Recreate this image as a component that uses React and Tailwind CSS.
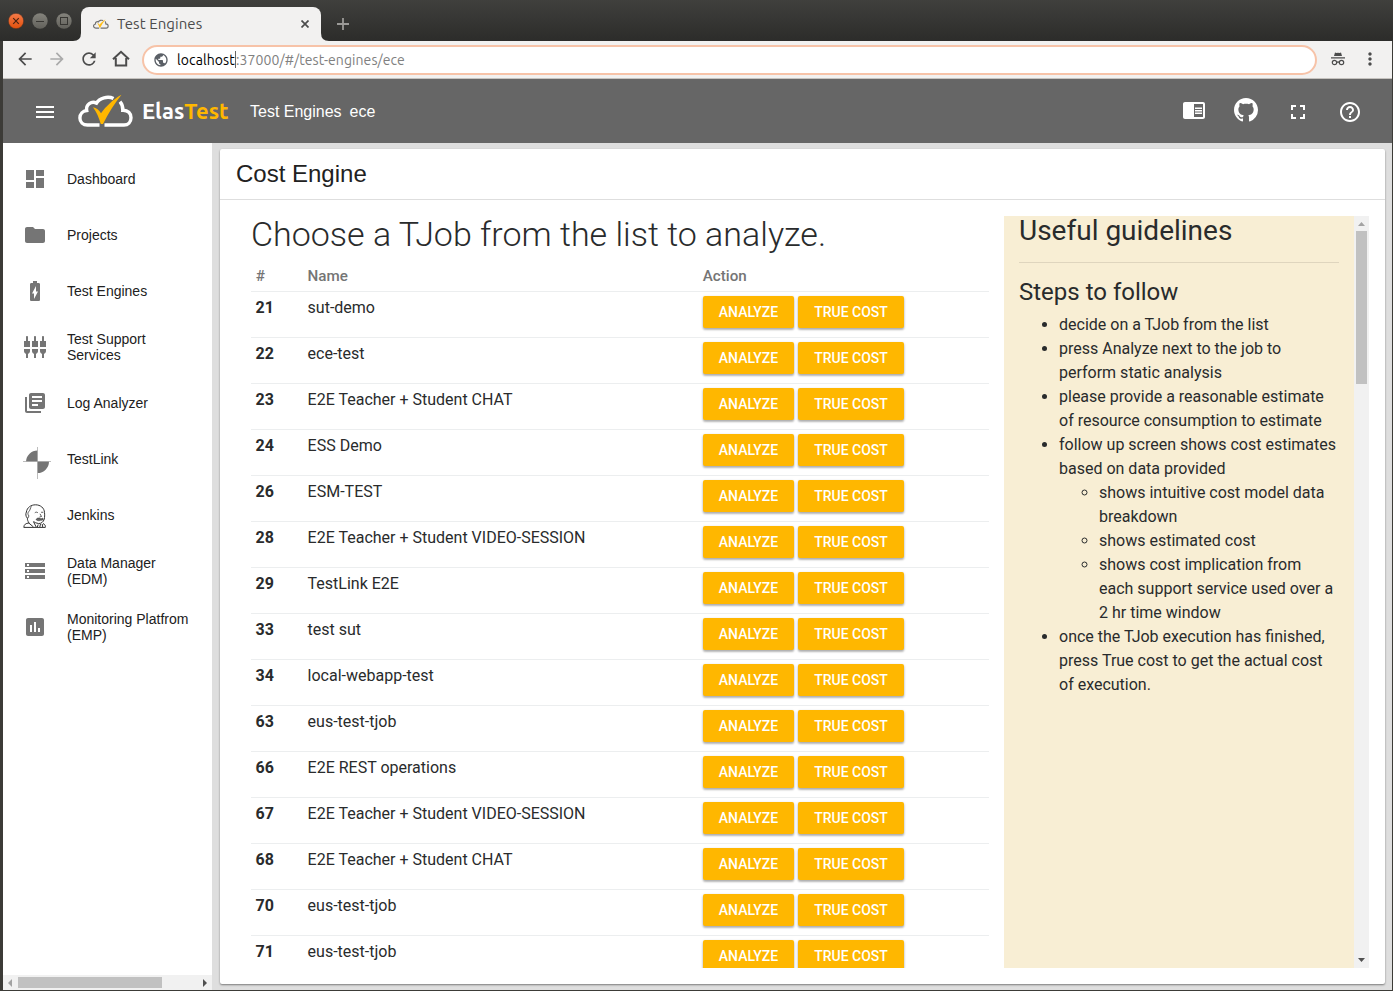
import React from "react";
import {
  MdDashboard, MdFolder, MdBatteryChargingFull, MdSettingsInputComponent, MdLibraryBooks,
  MdStorage, MdAssessment, MdChromeReaderMode, MdFullscreen, MdHelpOutline, MdMenu,
  MdArrowBack, MdArrowForward, MdRefresh, MdPublic, MdMoreVert,
} from "react-icons/md";

function CloudMark({ className, cloud = "#fff", tick = "#ffb700", stroke = 3.4 }) {
  return (
    <svg className={className} viewBox="0 0 56 33" fill="none">
      <path
        d="M21.500 31H9.500C5 31 1.900 27.900 1.900 23.900C1.900 19.800 4.900 16.900 8.700 16.500C7.600 10.500 13.500 6.700 18.500 9.100C21.500 3.900 30 1.800 35.500 4.600M42 7.600C44 10 45 12.500 44.800 16.200C50 16 53 19.400 53 23.700C53 28 50 31 46 31H26.500"
        stroke={cloud}
        strokeWidth={stroke}
      />
      <path d="M15 13.300C18.500 14 21 16 23 19.200C28 12.500 35 5.500 43.500 .8C36.500 9.500 30.500 19 25 30H22.800C21 24 18.500 18 15 13.300Z" fill={tick} />
    </svg>
  );
}

function TestLinkIcon() {
  return (
    <svg className="mt-2 ml-1 h-8 w-7 shrink-0" viewBox="0 0 28 32">
      <path d="M3 14.500A11.500 11.500 0 0 1 14.500 3.500V14.500ZM14.500 14.500H26A11.500 11.500 0 0 1 14.500 26Z" fill="#757575" />
      <path d="M0 14.500H28M14.500 0V32" stroke="#a0a0a0" strokeWidth="0.7" />
    </svg>
  );
}

function JenkinsIcon() {
  return (
    <svg className="mt-[2px] h-6 w-6" viewBox="0 0 24 24" fill="none" stroke="#333" strokeWidth="1" strokeLinejoin="round">
      <path d="M6 19C4.800 17 4.200 15.500 4.400 14.200C2.500 12.500 2.600 9.500 3.400 8C4 3.500 8 .8 12.500 .8C17.500 .8 21.300 4 21.500 8.500C21.800 10.500 21.600 13.500 21.300 15C20.500 18 18 19.800 15.500 19.500C13.500 19.300 11.800 18.600 10.500 17.500" />
      <path d="M4.400 14.200C5.500 14 6 12.500 5.600 11C4.500 10.500 4.800 8.600 5.800 7.500C7.500 6 7 4 8.500 2.500" strokeWidth=".8" />
      <path d="M6 19C2.800 19.200 .9 20.500 .8 23.400H22.300C22.600 21.800 22.200 20.500 20 19.500M6 19.200L10.500 23M10.500 17.800L13.200 23M15.200 20.500L14.300 23M17.500 20L16.800 23M19.200 20L19.700 23" />
      <path d="M11.800 8.800C13 7.800 14.300 8 15 9M18 8.500C19 7.900 20 8.300 20.500 9M17 9.800L18.500 12.500L16.500 13" strokeWidth=".8" />
      <path d="M13 15.500C14.500 13.300 17 14 18 15C19 14 20 14.200 20.500 15C19.500 16.500 18.500 16.500 18 16C16.500 17 14.500 17 13 15.500Z" fill="#666" strokeWidth=".6" />
    </svg>
  );
}

const navItems = [
  { icon: <MdDashboard />, label: "Dashboard" },
  { icon: <MdFolder />, label: "Projects" },
  { icon: <MdBatteryChargingFull />, label: "Test Engines" },
  { icon: <MdSettingsInputComponent />, label: "Test Support Services" },
  { icon: <MdLibraryBooks />, label: "Log Analyzer" },
  { icon: <TestLinkIcon />, label: "TestLink" },
  { icon: <JenkinsIcon />, label: "Jenkins" },
  { icon: <MdStorage />, label: "Data Manager (EDM)" },
  { icon: <MdAssessment />, label: "Monitoring Platfrom (EMP)" },
];

const jobs = [
  [21, "sut-demo"], [22, "ece-test"], [23, "E2E Teacher + Student CHAT"], [24, "ESS Demo"],
  [26, "ESM-TEST"], [28, "E2E Teacher + Student VIDEO-SESSION"], [29, "TestLink E2E"],
  [33, "test sut"], [34, "local-webapp-test"], [63, "eus-test-tjob"], [66, "E2E REST operations"],
  [67, "E2E Teacher + Student VIDEO-SESSION"], [68, "E2E Teacher + Student CHAT"],
  [70, "eus-test-tjob"], [71, "eus-test-tjob"],
];

function TitleBar() {
  return (
    <div className="flex h-[41px] shrink-0 bg-linear-to-b from-[#40403d] to-[#2c2c2a]">
      <svg className="h-[41px] w-[80px] shrink-0" viewBox="0 0 80 41" fill="none">
        <defs>
          <linearGradient id="close" x1="0" y1="0" x2="0" y2="1">
            <stop stopColor="#f47b4a" />
            <stop offset="1" stopColor="#e2500c" />
          </linearGradient>
          <linearGradient id="ctl" x1="0" y1="0" x2="0" y2="1">
            <stop stopColor="#84837c" />
            <stop offset="1" stopColor="#62615b" />
          </linearGradient>
        </defs>
        <circle cx="16" cy="21" r="7.700" fill="url(#close)" stroke="#3a2a22" strokeWidth=".5" />
        <path d="M13.200 18.200L18.800 23.800M18.800 18.200L13.200 23.800" stroke="#4a2313" strokeWidth="1.200" />
        <circle cx="40" cy="21" r="7.700" fill="url(#ctl)" />
        <path d="M36 21.500H44" stroke="#373632" />
        <circle cx="64" cy="21" r="7.700" fill="url(#ctl)" />
        <rect x="60.500" y="17.500" width="7" height="7" stroke="#373632" />
      </svg>
      <svg className="h-[41px] w-2 shrink-0 -ml-[7px]" viewBox="0 0 8 41"><path d="M0 41Q8 41 8 33V41Z" fill="#f2f1f0" /></svg>
      <div className="mt-[7px] flex w-[240px] items-center rounded-t-lg bg-[#f2f1f0] pr-3 pl-3">
        <CloudMark className="h-[10px] w-4" cloud="#707070" tick="#ffbe1a" stroke={4} />
        <span className="ml-2 flex-1 font-['Ubuntu','Noto_Sans',sans-serif] text-[15px] leading-5 tracking-[0.080px] text-[#4c4c4c]">Test Engines</span>
        <svg className="h-2 w-2" viewBox="0 0 8 8"><path d="M.5 .5L7.500 7.500M7.500 .5L.5 7.500" stroke="#4c4c4c" strokeWidth="1.700" /></svg>
      </div>
      <svg className="h-[41px] w-2 shrink-0" viewBox="0 0 8 41"><path d="M8 41Q0 41 0 33V41Z" fill="#f2f1f0" /></svg>
      <svg className="mt-[18px] ml-2 h-3 w-3" viewBox="0 0 12 12"><path d="M6 0V12M0 6H12" stroke="#9b9a97" strokeWidth="1.800" /></svg>
    </div>
  );
}

function AddressBar() {
  return (
    <div className="flex h-[38px] shrink-0 items-center border-b border-[#c5c2be] bg-[#f2f1f0] text-[#4c4c4c]">
      <MdArrowBack className="mb-px ml-3 h-5 w-5" />
      <MdArrowForward className="mb-px ml-3 h-5 w-5 text-[#aaa]" />
      <MdRefresh className="mb-px ml-3 h-5 w-5" />
      <svg className="mb-px ml-3 h-5 w-5" viewBox="0 0 20 20" fill="none" stroke="#4c4c4c" strokeWidth="2">
        <path d="M2 10.300L10 2.800L18 10.300M4.800 9V16.500H15.200V9" />
      </svg>
      <div className="ml-[11px] flex h-[30px] w-[1175px] items-center rounded-full border-2 border-[#f7c3a8] bg-white pl-[9px]">
        <MdPublic className="h-4 w-4 text-[#5a5f66]" />
        <div className="ml-2 flex items-center font-['Ubuntu','Noto_Sans',sans-serif] text-[14px] leading-5">
          <span className="inline-block w-[58px] tracking-[0.100px] text-black">localhost</span>
          <span className="h-[17px] w-px bg-[#666]" />
          <span className="tracking-[0.080px] text-[#808080]">:37000/#/test-engines/ece</span>
        </div>
      </div>
      <svg className="mb-px ml-[13px] h-4 w-4" viewBox="0 0 16 16" fill="#4c4c4c">
        <path d="M5 1.500L6.500 2L8 1.700L9.500 2L11 1.500L12 5H4ZM1 6.200H15V7.600H1Z" />
        <g fill="none" stroke="#4c4c4c" strokeWidth="1.200"><circle cx="4.500" cy="11.500" r="2.200" /><circle cx="11.500" cy="11.500" r="2.200" /><path d="M6.700 11.500Q8 10.300 9.300 11.500" /></g>
      </svg>
      <MdMoreVert className="mb-px ml-[14px] h-5 w-5" />
    </div>
  );
}

function AppHeader() {
  return (
    <header className="flex h-16 shrink-0 items-center bg-[#666] text-white">
      <MdMenu className="mt-[2px] ml-[30px] h-6 w-6 shrink-0" />
      <CloudMark className="mb-[2px] ml-[21px] h-[33px] w-[56px]" />
      <div className="ml-[8px] w-[108px] font-['Ubuntu','Noto_Sans',sans-serif] text-[22px] leading-8 font-semibold">
        <span className="inline-block">Elas<span className="text-[#ffb700]">Test</span></span>
      </div>
      <div className="mt-[2px] flex flex-1 gap-2 font-['Liberation_Sans',sans-serif] text-base"><span>Test Engines</span><span>ece</span></div>
      <div className="mr-[30px] flex items-center gap-7">
        <MdChromeReaderMode className="mb-[2px] h-6 w-6" />
        <svg className="mb-[2px] h-6 w-6" viewBox="0 0 16 16" fill="currentColor">
          <path d="M8 0C3.580 0 0 3.580 0 8c0 3.540 2.290 6.530 5.470 7.590.4.070.55-.17.55-.38 0-.19-.01-.82-.01-1.490-2.010.37-2.530-.49-2.690-.94-.09-.23-.48-.94-.82-1.130-.28-.15-.68-.52-.01-.53.63-.01 1.080.58 1.230.82.72 1.210 1.870.87 2.330.66.07-.52.28-.87.51-1.070-1.780-.2-3.640-.89-3.640-3.950 0-.87.31-1.590.82-2.150-.08-.2-.36-1.020.08-2.120 0 0 .67-.21 2.200.82.64-.18 1.320-.27 2-.27s1.360.09 2 .27c1.530-1.040 2.200-.82 2.200-.82.44 1.100.16 1.920.08 2.120.51.56.82 1.270.82 2.150 0 3.070-1.870 3.750-3.650 3.950.29.25.54.73.54 1.480 0 1.070-.01 1.930-.01 2.200 0 .21.15.46.55.38A8.010 8.010 0 0 0 16 8c0-4.420-3.580-8-8-8z" />
        </svg>
        <MdFullscreen className="mt-[2px] h-6 w-6" />
        <MdHelpOutline className="mt-[2px] h-6 w-6" />
      </div>
    </header>
  );
}

function Sidebar() {
  return (
    <aside className="flex w-[209px] shrink-0 flex-col bg-white">
      <nav className="flex-1 pt-2 font-['Liberation_Sans',sans-serif] text-sm leading-4 text-[#212121]">
        {navItems.map(({ icon, label }) => (
          <a key={label} className="flex h-14 items-center pl-5">
            <span className="flex w-6 shrink-0 items-center justify-center text-2xl text-[#757575]">{icon}</span>
            <span className="ml-5 w-[128px]">{label}</span>
          </a>
        ))}
      </nav>
      <div className="flex h-[15px] items-center justify-between bg-[#f1f1f1] px-[5px]">
        <svg className="h-2 w-1" viewBox="0 0 4 8"><path d="M4 0V8L0 4Z" fill="#a3a3a3" /></svg>
        <span className="mr-auto ml-[6px] h-[11px] w-[144px] bg-[#c1c1c1]" />
        <svg className="h-2 w-1" viewBox="0 0 4 8"><path d="M0 0V8L4 4Z" fill="#505050" /></svg>
      </div>
    </aside>
  );
}

function ActionButton({ children, className }) {
  return (
    <button className={`h-8 rounded-xs bg-[#ffb700] text-center text-sm leading-8 font-medium text-white shadow-[0_2px_2px_rgba(0,0,0,0.200),0_1px_3px_rgba(0,0,0,0.200)] ${className}`}>
      {children}
    </button>
  );
}

function JobTable() {
  return (
    <section className="h-[752px] w-[738px] shrink-0 overflow-hidden">
      <h1 className="h-[43px] text-[34px] leading-[36px] font-light whitespace-nowrap">
        Choose a TJob from the list to analyze.
      </h1>
      <div className="flex h-8 items-center pt-[2px] text-[15.200px] font-medium text-[#757575]">
        <span className="w-[56.600px] pl-[4.800px]">#</span>
        <span className="w-[395.200px]">Name</span>
        <span>Action</span>
      </div>
      {jobs.map(([id, name]) => (
        <div key={id} className="flex h-[46px] border-t border-[#eceeef] pt-1">
          <b className="w-[56.600px] shrink-0 pl-[4.600px] font-bold">{id}</b>
          <span className="w-[395.400px] shrink-0">{name}</span>
          <div className="flex gap-1">
            <ActionButton className="w-[91px]">ANALYZE</ActionButton>
            <ActionButton className="w-[106px]">TRUE COST</ActionButton>
          </div>
        </div>
      ))}
    </section>
  );
}

function Guidelines() {
  return (
    <aside className="ml-[15px] flex h-[752px] w-[365px] shrink-0 overflow-hidden bg-[#f8eed4]">
      <div className="w-[350px] px-[15px]">
        <h2 className="h-[31px] text-[28px] leading-[29px]">Useful guidelines</h2>
        <hr className="mt-[15px] mb-4 border-[#dfd5be]" />
        <h3 className="mb-2 pt-px text-2xl leading-[25px]">Steps to follow</h3>
        <ul className="list-disc pl-10">
          <li>decide on a TJob from the list</li>
          <li>press Analyze next to the job to<br />perform static analysis</li>
          <li>please provide a reasonable estimate<br />of resource consumption to estimate</li>
          <li className="whitespace-nowrap">follow up screen shows cost estimates<br />based on data provided
            <ul className="list-[circle] pl-10">
              <li>shows intuitive cost model data<br />breakdown</li>
              <li>shows estimated cost</li>
              <li>shows cost implication from<br />each support service used over a<br />2 hr time window</li>
            </ul>
          </li>
          <li>once the TJob execution has finished,<br />press True cost to get the actual cost<br />of execution.</li>
        </ul>
      </div>
      <div className="flex w-[15px] flex-col items-center bg-[#f1f1f1]">
        <svg className="mt-[6px] h-1 w-[7px]" viewBox="0 0 7 4"><path d="M0 4H7L3.500 0Z" fill="#a3a3a3" /></svg>
        <span className="mt-[5px] h-[153px] w-[11px] bg-[#c1c1c1]" />
        <svg className="mt-auto mb-[6px] h-1 w-[7px]" viewBox="0 0 7 4"><path d="M0 0H7L3.500 4Z" fill="#505050" /></svg>
      </div>
    </aside>
  );
}

export default function App() {
  return (
    <div className="flex h-[991px] w-[1393px] flex-col overflow-hidden bg-[#3c3b37]">
      <TitleBar />
      <div className="mr-px mb-px ml-[3px] flex min-h-0 flex-1 flex-col">
        <AddressBar />
        <AppHeader />
        <div className="flex min-h-0 flex-1 bg-[#dedede]">
          <Sidebar />
          <main className="mt-[6px] mb-[6px] ml-2 flex w-[1165px] flex-col rounded-xs bg-white shadow-[0_1px_2px_rgba(0,0,0,0.450)]">
            <h1 className="h-[51px] shrink-0 border-b border-[#dedede] pl-4 font-['Liberation_Sans',sans-serif] text-2xl leading-[50px] text-[#212121]">Cost Engine</h1>
            <div className="flex pt-4 pl-[31px] font-['Roboto',sans-serif] text-base leading-6 text-[#292b2c]">
              <JobTable />
              <Guidelines />
            </div>
          </main>
        </div>
      </div>
    </div>
  );
}
